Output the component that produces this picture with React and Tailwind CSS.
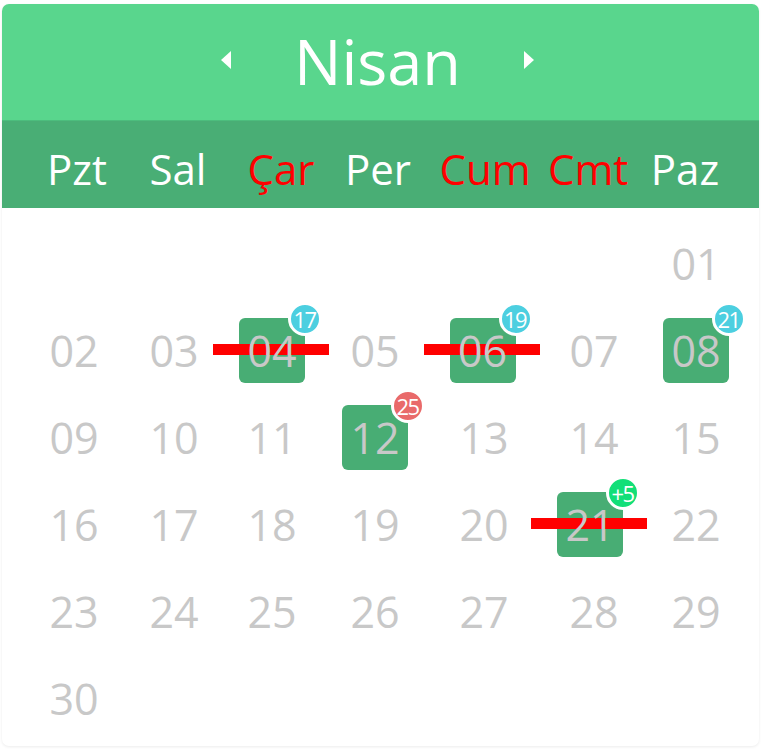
import React from 'react';

const font = { fontFamily: '"Open Sans", "Noto Sans", sans-serif' };

const weekdays = [
  { label: 'Pzt', red: false },
  { label: 'Sal', red: false },
  { label: 'Çar', red: true },
  { label: 'Per', red: false },
  { label: 'Cum', red: true },
  { label: 'Cmt', red: true },
  { label: 'Paz', red: false },
];

// badge colours by event type
const badgeClass = {
  blue: 'bg-[#4ccfe0]',
  red: 'bg-[#e96a6a]',
  green: 'bg-[#12df78]',
};

const events = {
  4: { badge: '17', color: 'blue', struck: true, shift: '' },
  6: { badge: '19', color: 'blue', struck: true, shift: '-ml-[3px]' },
  8: { badge: '21', color: 'blue', struck: false, shift: '' },
  12: { badge: '25', color: 'red', struck: false, shift: '' },
  21: { badge: '+5', color: 'green', struck: true, shift: '-ml-[8px]' },
};

const Arrow = ({ dir }) => (
  <svg width="13" height="20" viewBox="0 0 13 20" className="block">
    {dir === 'left' ? (
      <polygon points="12,1 2,10 12,19" fill="#fff" />
    ) : (
      <polygon points="1,1 11,10 1,19" fill="#fff" />
    )}
  </svg>
);

const DayCell = ({ day }) => {
  if (!day) return <div className="h-[87px]" />;
  const ev = events[day];
  const label = String(day).padStart(2, '0');

  if (!ev) {
    return (
      <div className="h-[87px] flex items-center justify-center text-[43px] text-[#c8c8c8] leading-none">
        {label}
      </div>
    );
  }

  return (
    <div className="h-[87px] flex items-center justify-center">
      <div className={`relative w-[66px] h-[65px] rounded-[6px] bg-[#48ad74] flex items-center justify-center ${ev.shift}`}>
        {ev.struck && (
          <div className="absolute left-[-26px] right-[-24px] top-[26px] h-[11px] bg-[#ff0000]" />
        )}
        <span className="relative text-[43px] text-[#c8c8c8] leading-none">{label}</span>
        <div
          className={`absolute -top-[16px] -right-[17px] w-[34px] h-[34px] rounded-full border-[3px] border-white flex items-center justify-center text-white text-[22px] leading-none tracking-[-1.5px] pr-[1px] ${badgeClass[ev.color]}`}
        >
          {ev.badge}
        </div>
      </div>
    </div>
  );
};

export default function App() {
  // April: the 1st is a Sunday
  const cells = [null, null, null, null, null, null];
  for (let d = 1; d <= 30; d++) cells.push(d);

  return (
    <div className="min-h-screen bg-white pt-[4px] px-[2px]" style={font}>
      <div className="w-[757px] h-[742px] rounded-[7px] overflow-hidden bg-white shadow-[0_1px_3px_rgba(0,0,0,0.08)]">
        {/* Month header */}
        <div className="h-[117px] bg-[#59d68d] border-b border-[#4cbd7d] flex items-center justify-center gap-[62px] pb-[4px] pr-[6px]">
          <Arrow dir="left" />
          <span className="text-[63px] text-white leading-none">Nisan</span>
          <Arrow dir="right" />
        </div>

        {/* Weekdays */}
        <div className="h-[87px] bg-[#49ae75] pl-[24px] grid grid-cols-[102px_100px_106px_88px_126px_78px_118px] items-center">
          {weekdays.map((w) => (
            <div
              key={w.label}
              className={`text-center text-[42px] leading-none pt-[8px] ${w.red ? 'text-[#ff0000]' : 'text-white'}`}
            >
              {w.label}
            </div>
          ))}
        </div>

        {/* Days */}
        <div className="pt-[12px] pl-[22px] grid grid-cols-[100px_100px_96px_110px_108px_112px_92px]">
          {cells.map((d, i) => (
            <DayCell key={i} day={d} />
          ))}
        </div>
      </div>
    </div>
  );
}
